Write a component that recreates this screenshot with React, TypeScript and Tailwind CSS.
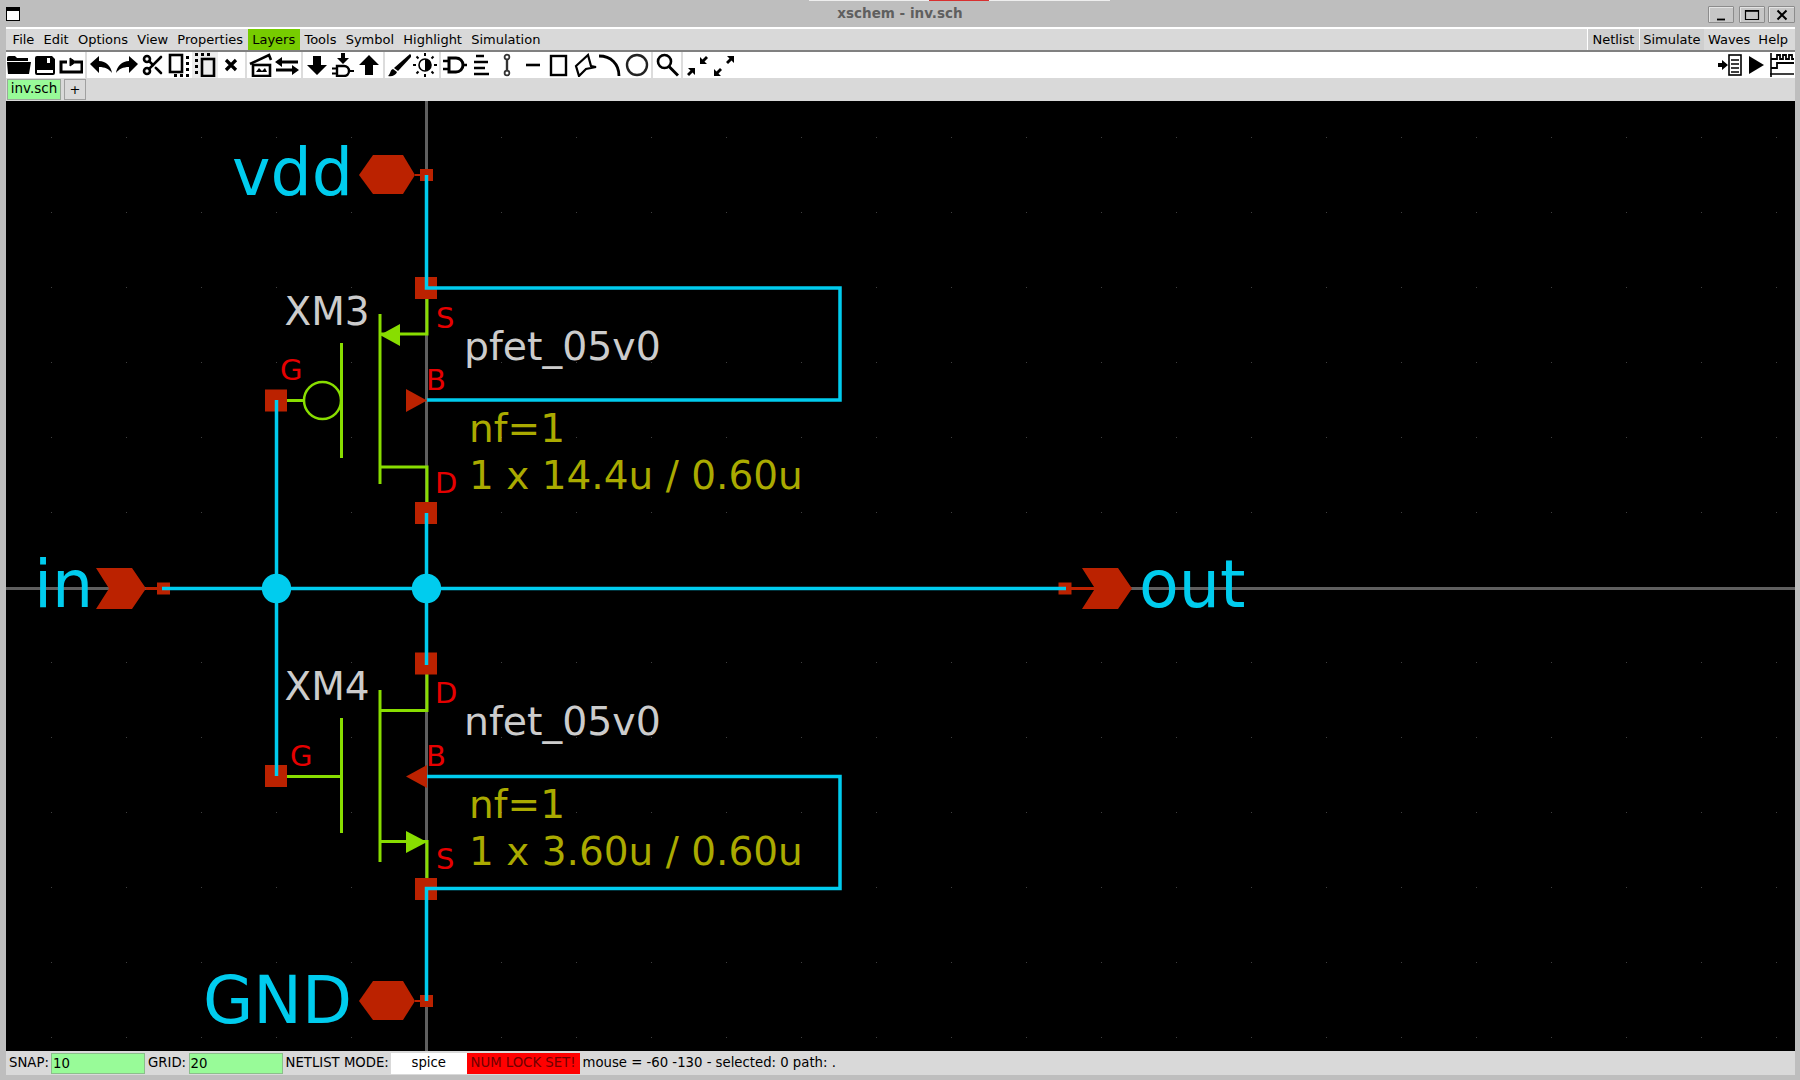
import type { ReactNode } from "react";
import { Scissors } from "lucide-react";

const CYAN = "#00ccee";
const RED = "#bb2200";
const GREEN = "#88dd00";
const LABEL = "#e60000";
const GRAY = "#cccccc";
const OLIVE = "#aaaa00";

const leftMenu = ["File", "Edit", "Options", "View", "Properties", "Layers", "Tools", "Symbol", "Highlight", "Simulation"];

const Tool = ({ children, active }: { children: ReactNode; active?: boolean }) => (
  <div className={`w-[26px] h-[26px] flex items-center justify-center ${active ? "bg-[#ececec]" : ""}`}>
    <svg viewBox="0 0 24 24" className="w-6 h-6" fill="black">
      {children}
    </svg>
  </div>
);

const Sep = () => (
  <div className="w-[4px] h-[26px] flex justify-center">
    <div className="w-[2px] bg-[#dcdcdc]" />
  </div>
);

const WinButton = ({ children, wide }: { children: ReactNode; wide?: boolean }) => (
  <div className={`${wide ? "w-[27px]" : "w-[26px]"} h-[17px] bg-[#c6c6c6] border border-[#8c8c8c] rounded-[1px] flex items-center justify-center shadow-[inset_1px_1px_0_#e4e4e4]`}>
    <svg viewBox="0 0 16 12" className="w-4 h-3" stroke="black" fill="none">
      {children}
    </svg>
  </div>
);

const Toolbar = () => (
  <div className="h-[26px] bg-white flex items-center">
    {/* open */}
    <Tool>
      <path d="M0 5a2 2 0 0 1 2-2h6l2 2h11v3H0z M0 9h24l-2 12H1z" />
    </Tool>
    {/* save */}
    <Tool>
      <path d="M4 3h15l3 3v14a2 2 0 0 1-2 2H4a2 2 0 0 1-2-2V5a2 2 0 0 1 2-2z M14 5v5h3V5z M4 17v3h16v-3z" fillRule="evenodd" />
    </Tool>
    {/* reload */}
    <Tool>
      <path d="M8 9H2v10h21V9h-7" fill="none" stroke="black" strokeWidth="3" />
      <path d="M11 8V5l6 4-6 4z" strokeWidth="1" stroke="black" />
    </Tool>
    <Sep />
    {/* undo */}
    <Tool>
      <path d="M1 11l9-8v5c7 0 12 5 13 12-3-4-7-6-13-6v6z" />
    </Tool>
    {/* redo */}
    <Tool>
      <path d="M23 11l-9-8v5C7 8 2 13 1 20c3-4 7-6 13-6v6z" />
    </Tool>
    {/* cut */}
    <Tool>
      <foreignObject x="0" y="0" width="24" height="24">
        <Scissors size={24} strokeWidth={2.6} color="black" />
      </foreignObject>
    </Tool>
    {/* copy */}
    <Tool>
      <rect x="3" y="2" width="12" height="17" fill="none" stroke="black" strokeWidth="2.6" />
      <path d="M19 3h3v3h-3z M19 9h3v3h-3z M19 15h3v3h-3z M19 21h3v3h-3z M13 21h3v3h-3z M7 21h3v3H7z" />
    </Tool>
    {/* move */}
    <Tool active>
      <rect x="9" y="6" width="12" height="17" fill="none" stroke="black" strokeWidth="2.6" />
      <path d="M2 0h3v3H2z M8 0h3v3H8z M14 0h3v3h-3z M2 6h3v3H2z M2 12h3v3H2z M2 18h3v3H2z" />
    </Tool>
    {/* delete */}
    <Tool>
      <path d="M7 7l10 10M17 7L7 17" stroke="black" strokeWidth="3.2" fill="none" />
    </Tool>
    <Sep />
    {/* descend */}
    <Tool>
      <path d="M1 11L20 2l2 5" fill="none" stroke="black" strokeWidth="2.6" />
      <rect x="4" y="12" width="17" height="11" fill="none" stroke="black" strokeWidth="2.6" />
      <path d="M7 19l3-4 3 3 3-3 2 4z" />
    </Tool>
    {/* swap */}
    <Tool>
      <path d="M6 9h17M1 17h17" stroke="black" strokeWidth="3" fill="none" />
      <path d="M0 9l7-5v10z M24 17l-7-5v10z" />
    </Tool>
    <Sep />
    <Tool>
      <path d="M8 3h8v9h6L12 22 2 12h6z" />
    </Tool>
    {/* symbol */}
    <Tool>
      <path d="M10 0h4v5h4l-6 6-6-6h4z" />
      <path d="M6 13h7a5 5 0 0 1 0 10H6z" fill="none" stroke="black" strokeWidth="2.4" />
      <path d="M1 15.5h5M1 20.5h5M18 18h5" stroke="black" strokeWidth="2.2" />
    </Tool>
    <Tool>
      <path d="M12 2l10 10h-6v10H8V12H2z" />
    </Tool>
    <Sep />
    {/* brush */}
    <Tool>
      <path d="M23 1l2 2L11 18l-4-3z" />
      <path d="M6 16c-3 1-2 4-5 7 4 1 8-1 9-4z" />
    </Tool>
    {/* sun */}
    <Tool>
      <circle cx="12" cy="12" r="6" fill="white" stroke="black" strokeWidth="1.6" />
      <path d="M12 6a6 6 0 0 1 0 12z" />
      <path d="M12 0v3M12 21v3M0 12h3M21 12h3M3.5 3.5l2 2M18.5 18.5l2 2M20.5 3.5l-2 2M5.5 18.5l-2 2" stroke="black" strokeWidth="2" />
    </Tool>
    <Sep />
    {/* gate */}
    <Tool>
      <path d="M6 5h7a7 7 0 0 1 0 14H6z" fill="none" stroke="black" strokeWidth="3" />
      <path d="M0 8h6M0 16h6M20 12h4" stroke="black" strokeWidth="2.6" />
    </Tool>
    {/* bus */}
    <Tool>
      <path d="M7 3h8M5 9h14M5 15h11M5 21h15" stroke="black" strokeWidth="2.6" />
    </Tool>
    {/* wire */}
    <Tool>
      <path d="M12 5v14" stroke="#333" strokeWidth="2.4" />
      <circle cx="12" cy="4" r="2.4" fill="white" stroke="#333" strokeWidth="1.8" />
      <circle cx="12" cy="20" r="2.4" fill="white" stroke="#333" strokeWidth="1.8" />
    </Tool>
    {/* line */}
    <Tool>
      <path d="M5 12h14" stroke="black" strokeWidth="2.6" />
    </Tool>
    {/* rect */}
    <Tool>
      <rect x="4" y="3" width="15" height="19" fill="none" stroke="black" strokeWidth="2.4" />
    </Tool>
    {/* polygon */}
    <Tool>
      <path d="M3 13L15 2l3 11 5 1-10 2-7 7z" fill="none" stroke="black" strokeWidth="2.2" />
    </Tool>
    {/* arc */}
    <Tool>
      <path d="M0 3c12 0 20 8 20 20" fill="none" stroke="black" strokeWidth="2.8" />
    </Tool>
    {/* circle */}
    <Tool>
      <circle cx="12" cy="12" r="10" fill="none" stroke="#222" strokeWidth="2.4" />
    </Tool>
    <Sep />
    {/* zoom box */}
    <Tool>
      <circle cx="9.5" cy="8.5" r="6.5" fill="none" stroke="black" strokeWidth="2.6" />
      <path d="M14 13.5l9 9" stroke="black" strokeWidth="3" />
    </Tool>
    <Sep />
    {/* collapse */}
    <Tool>
      <path d="M15 4V11H22L19.5 8.5L23 5L21 3L17.5 6.5Z" />
      <path d="M10 22V15H3L5.5 17.5L2 21L4 23L7.5 19.5Z" />
    </Tool>
    {/* expand */}
    <Tool>
      <path d="M16 3H23V10L20.5 7.5L17 11L15 9L18.5 5.5Z" />
      <path d="M10 23H3V16L5.5 18.5L9 15L11 17L7.5 20.5Z" />
    </Tool>
    <div className="ml-auto flex">
      {/* netlist */}
      <Tool>
        <path d="M0 10h4V7l6 5-6 5v-3H0z" />
        <rect x="11" y="2" width="12" height="20" fill="white" stroke="black" strokeWidth="1.6" />
        <path d="M13 7h8M13 11h8M13 15h8M13 19h8" stroke="black" strokeWidth="1.4" />
      </Tool>
      {/* simulate */}
      <Tool>
        <path d="M5 3l15 9-15 9z" />
      </Tool>
      {/* waves */}
      <Tool>
        <path d="M1 0v24M0 21h26" stroke="black" strokeWidth="1.6" fill="none" />
        <path d="M1 6h6V2h3v4h3V2h3v4h3V2h3v4h3M1 15h6v-5h17" stroke="black" strokeWidth="1.8" fill="none" />
      </Tool>
    </div>
  </div>
);

const Pin = ({ cx, cy }: { cx: number; cy: number }) => (
  <rect x={cx - 11} y={cy - 11} width="22" height="22" fill={RED} />
);

const SmallPin = ({ cx, cy }: { cx: number; cy: number }) => (
  <rect x={cx - 6.5} y={cy - 6} width="13" height="12" fill={RED} />
);

const gridDots: { x: number; y: number }[] = [];
for (let i = 0; i < 24; i++) {
  for (let j = 0; j < 13; j++) {
    gridDots.push({ x: 51 + 75 * i, y: 137 + 75 * j });
  }
}

const Schematic = () => (
  <svg viewBox="6 101 1789 950" className="w-[1789px] h-[950px] block">
    {gridDots.map((d) => (
      <rect key={`${d.x}-${d.y}`} x={d.x} y={d.y} width="1" height="1" fill="#3f3f3f" />
    ))}

    {/* axes */}
    <path d="M426.5 101V1051M6 588.5H1795" stroke="#5f5f5f" strokeWidth="3" fill="none" />

    {/* pfet */}
    <g stroke={GREEN} strokeWidth="3" fill="none">
      <path d="M427 288V334H380" />
      <path d="M380 314V484" />
      <path d="M341.5 343V458" />
      <path d="M380 467H427V513" />
      <circle cx="322.5" cy="400.5" r="18.5" strokeWidth="2.5" />
      <path d="M276 400.5H304" />
    </g>
    <path d="M380 335L400 324V346Z" fill={GREEN} />
    <path d="M427 400.5L406 389V412Z" fill={RED} />

    {/* nfet */}
    <g stroke={GREEN} strokeWidth="3" fill="none">
      <path d="M427 663V710.5H380" />
      <path d="M380 690V862" />
      <path d="M341.5 718V833" />
      <path d="M276 776.5H341" />
      <path d="M380 841.5H427V889" />
    </g>
    <path d="M427 842L406 831V853Z" fill={GREEN} />
    <path d="M406 776.5L427 765V788Z" fill={RED} />

    {/* pins */}
    <Pin cx={426} cy={288} />
    <Pin cx={426} cy={513} />
    <Pin cx={276} cy={400.5} />
    <Pin cx={426} cy={663.5} />
    <Pin cx={276} cy={776} />
    <Pin cx={426} cy={889} />

    {/* port symbols */}
    <path d="M359 175L373 155H403L415 175L403 194H373Z" fill={RED} />
    <path d="M359 1001L373 981H403L415 1001L403 1020H373Z" fill={RED} />
    <path d="M415 175H421M415 1001H421" stroke={RED} strokeWidth="2" />
    <SmallPin cx={426.5} cy={175} />
    <SmallPin cx={426.5} cy={1001} />
    <path d="M96 568H132L146 588.5L132 609H96L109 588.5Z" fill={RED} />
    <path d="M146 588.5H158" stroke={RED} strokeWidth="3" />
    <SmallPin cx={163.5} cy={588.5} />
    <path d="M1082 568H1118L1132 588.5L1118 609H1082L1095 588.5Z" fill={RED} />
    <path d="M1070 588.5H1096" stroke={RED} strokeWidth="3" />
    <SmallPin cx={1065} cy={588.5} />

    {/* wires */}
    <g stroke={CYAN} strokeWidth="3.5" fill="none">
      <path d="M426.5 175V288H840V400H427" />
      <path d="M426.5 513V665" />
      <path d="M276.5 400V776" />
      <path d="M162 588.5H1066" />
      <path d="M427 776.5H840V888.5H426.5V1001" />
    </g>
    <circle cx="276.5" cy="588.5" r="14.7" fill={CYAN} />
    <circle cx="426.5" cy="588.5" r="14.7" fill={CYAN} />

    {/* text */}
    <g fontFamily="'DejaVu Sans', sans-serif">
      <g fontSize="65" fill={CYAN}>
        <text x="232" y="195">vdd</text>
        <text x="203" y="1023">GND</text>
        <text x="34" y="607">in</text>
        <text x="1139" y="607">out</text>
      </g>
      <g fontSize="39" fill={GRAY}>
        <text x="284.5" y="325">XM3</text>
        <text x="284.5" y="700">XM4</text>
      </g>
      <g fontSize="39.4" fill={GRAY}>
        <text x="464" y="360">pfet_05v0</text>
        <text x="464" y="735">nfet_05v0</text>
      </g>
      <g fontSize="39" fill={OLIVE}>
        <text x="469" y="442">nf=1</text>
        <text x="469" y="489">1 x 14.4u / 0.60u</text>
        <text x="469" y="818">nf=1</text>
        <text x="469" y="865">1 x 3.60u / 0.60u</text>
      </g>
      <g fontSize="29" fill={LABEL}>
        <text x="436" y="328">S</text>
        <text x="280" y="380">G</text>
        <text x="426" y="390">B</text>
        <text x="435" y="493">D</text>
        <text x="435" y="703">D</text>
        <text x="290" y="766">G</text>
        <text x="426" y="766">B</text>
        <text x="436" y="869">S</text>
      </g>
    </g>
  </svg>
);

export default function App() {
  return (
    <div className="w-[1800px] h-[1080px] overflow-hidden bg-[#bebebe] flex flex-col font-['DejaVu_Sans',sans-serif] text-[13px] text-black">
      {/* window manager title */}
      <div className="h-[27px] relative flex items-center justify-center shrink-0">
        <div className="absolute left-[809px] top-0 w-[301px] h-px bg-[#eeeeee]">
          <div className="ml-[120px] w-[60px] h-px bg-[#d83030]" />
        </div>
        <div className="absolute left-[6px] top-[7px] w-[14px] h-[14px] border border-black border-t-[4px] bg-white" />
        <span className="font-bold text-[13.5px] text-[#5f5f5f]">xschem - inv.sch</span>
        <div className="absolute right-[5px] top-[6px] flex gap-[3px]">
          <div className="flex gap-[5px]">
            <WinButton>
              <path d="M4 10.5h8" strokeWidth="1.8" />
            </WinButton>
            <WinButton>
              <path d="M1.5 1.5h13v9h-13z" strokeWidth="1.2" />
              <path d="M1.5 2h13" strokeWidth="1.6" />
            </WinButton>
          </div>
          <WinButton wide>
            <path d="M3.5 1.5l9 9M12.5 1.5l-9 9" strokeWidth="2" />
          </WinButton>
        </div>
      </div>

      <div className="flex-1 pl-[6px] pr-[5px] pb-[5px] flex flex-col min-h-0">
        {/* menu bar */}
        <div className="h-[25px] shrink-0 bg-[#d9d9d9] border-t-2 border-t-white border-b-2 border-b-[#808080] flex items-stretch pl-[2px]">
          {leftMenu.map((m) => (
            <div key={m} className={`px-[4.6px] flex items-center ${m === "Layers" ? "bg-[#77cc00]" : ""}`}>
              {m}
            </div>
          ))}
          <div className="ml-auto flex items-stretch">
            <div className="w-[52px] flex items-center justify-center bg-[#cfcfcf] border-l border-white">Netlist</div>
            <div className="w-[65px] flex items-center justify-center bg-[#cfcfcf] border-l border-white">Simulate</div>
            <div className="px-[4px] flex items-center">Waves</div>
            <div className="px-[4px] flex items-center mr-[3px]">Help</div>
          </div>
        </div>

        <Toolbar />

        {/* tabs */}
        <div className="h-[23px] shrink-0 bg-[#d9d9d9] flex items-center gap-[3px] pl-px">
          <div className="w-[54px] h-[21px] bg-[#98fb98] border border-[#9aa89a] flex items-center justify-center text-[13.5px] pb-[2px]">inv.sch</div>
          <div className="w-[22px] h-[21px] border border-[#a0a0a0] flex items-center justify-center">+</div>
        </div>

        {/* canvas */}
        <div className="h-[950px] shrink-0 bg-black">
          <Schematic />
        </div>

        {/* status bar */}
        <div className="h-[24px] shrink-0 bg-[#d9d9d9] flex items-center pl-[3px] text-[13.25px]">
          <span className="w-[42px]">SNAP:</span>
          <div className="w-[94px] h-[21px] bg-[#98fb98] border border-[#8bbf8b] pl-px leading-[20px]">10</div>
          <span className="w-[43.5px] pl-[3px]">GRID:</span>
          <div className="w-[94px] h-[21px] bg-[#98fb98] border border-[#8bbf8b] pl-px leading-[20px]">20</div>
          <span className="w-[108.5px] pl-[3px] whitespace-nowrap">NETLIST MODE:</span>
          <div className="w-[75.5px] h-[21px] bg-white flex items-center justify-center">spice</div>
          <div className="w-[113px] h-[21px] bg-[#ff0000] text-[#700000] flex items-center justify-center whitespace-nowrap">NUM LOCK SET!</div>
          <span className="pl-[3px] whitespace-nowrap">mouse = -60 -130 - selected: 0 path: .</span>
        </div>
      </div>
    </div>
  );
}
